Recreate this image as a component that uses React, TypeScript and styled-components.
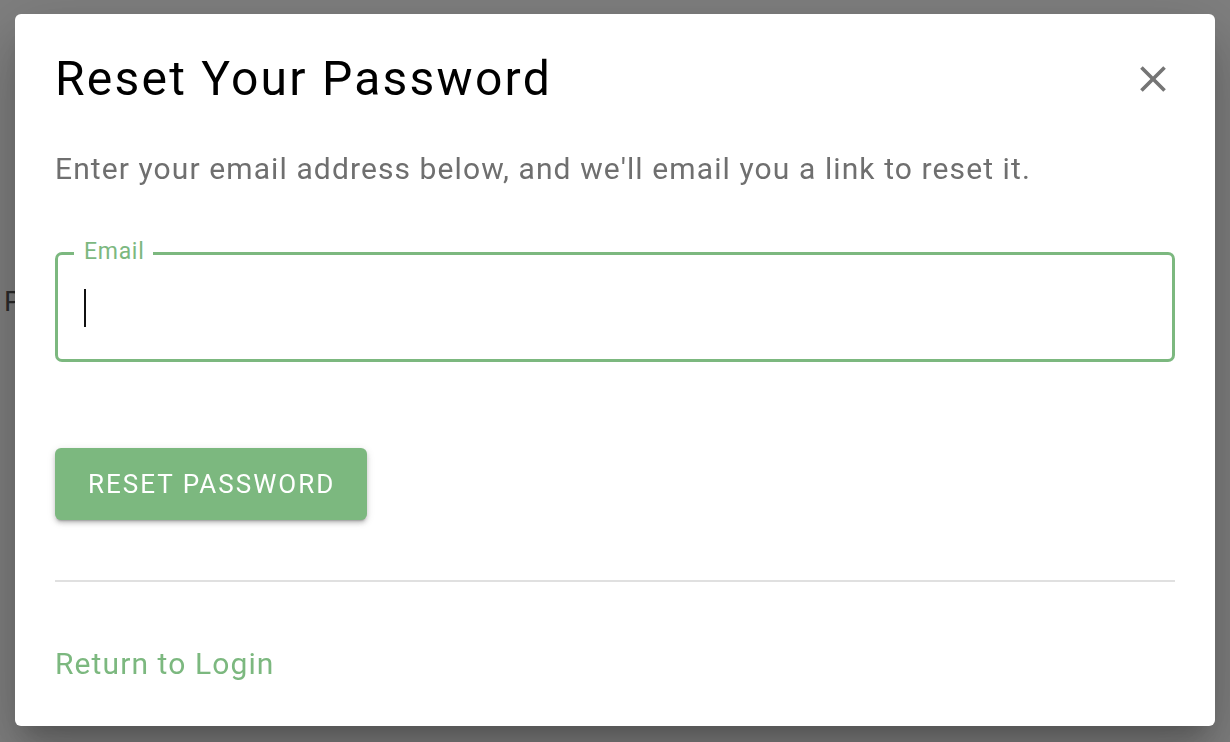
import React from "react";
import styled, { createGlobalStyle } from "styled-components";

const GREEN = "#7cb87f";

const Global = createGlobalStyle`
  html, body { margin: 0; padding: 0; background: #fff; }
  body { font-family: Roboto, "Noto Sans", Arial, sans-serif; }
  * { box-sizing: border-box; }
`;

const Page = styled.main`
  height: 742px;
  padding: 284px 0 0 4px;
`;

const PageText = styled.p`
  margin: 0;
  font-size: 28px;
  line-height: 36px;
  color: #555;
`;

const Backdrop = styled.div`
  position: fixed;
  inset: 0;
  background: rgba(0, 0, 0, 0.5);
  display: flex;
  justify-content: center;
  align-items: flex-start;
  padding-top: 14px;
`;

const Dialog = styled.section`
  width: 1200px;
  height: 712px;
  background: #fff;
  border-radius: 6px;
  padding: 37px 40px 0 40px;
  display: flex;
  flex-direction: column;
  box-shadow: 0px 16px 22px -10px rgba(0, 0, 0, 0.2),
    0px 36px 56px 4px rgba(0, 0, 0, 0.14),
    0px 14px 68px 12px rgba(0, 0, 0, 0.12);
`;

const Header = styled.header`
  display: flex;
  align-items: center;
  justify-content: space-between;
`;

const Title = styled.h2`
  margin: 0;
  font-size: 48px;
  line-height: 56px;
  font-weight: 400;
  letter-spacing: 2.25px;
  color: #000;
`;

const CloseButton = styled.button`
  width: 44px;
  height: 44px;
  padding: 0;
  border: none;
  background: none;
  color: #757575;
  display: flex;
  align-items: center;
  justify-content: center;
  cursor: pointer;
`;

const Lead = styled.p`
  margin: 42px 0 0 0;
  font-size: 30px;
  line-height: 40px;
  letter-spacing: 1.1px;
  color: #6f6f6f;
`;

const Field = styled.div`
  position: relative;
  margin-top: 63px;
  height: 110px;
  border: 3px solid ${GREEN};
  border-radius: 7px;
  display: flex;
  align-items: center;
  padding: 0 26px;
`;

const FieldLabel = styled.label`
  position: absolute;
  top: -19px;
  left: 16px;
  padding: 0 9px 0 10px;
  background: #fff;
  color: ${GREEN};
  font-size: 23px;
  line-height: 32px;
  letter-spacing: 0.7px;
`;

const Input = styled.input`
  flex: 1;
  border: none;
  outline: none;
  font-family: inherit;
  font-size: 30px;
  line-height: 40px;
  padding: 0;
  background: transparent;
  caret-color: transparent;
`;

const Caret = styled.span`
  position: absolute;
  left: 26px;
  top: 34px;
  width: 2px;
  height: 38px;
  background: #111;
`;

const PrimaryButton = styled.button`
  align-self: flex-start;
  margin-top: 86px;
  height: 72px;
  padding: 0 32px 0 33px;
  border: none;
  border-radius: 6px;
  background: ${GREEN};
  color: #fff;
  font-family: inherit;
  font-size: 26px;
  font-weight: 400;
  letter-spacing: 2px;
  text-transform: uppercase;
  box-shadow: 0px 3px 2px -2px rgba(0, 0, 0, 0.22),
    0px 3px 4px 0px rgba(0, 0, 0, 0.16), 0px 2px 8px 0px rgba(0, 0, 0, 0.12);
  cursor: pointer;
`;

const Divider = styled.hr`
  margin: 60px 0 0 0;
  border: none;
  height: 2px;
  background: #e0e0e0;
`;

const LinkText = styled.a`
  margin-top: 62px;
  align-self: flex-start;
  font-size: 30px;
  line-height: 40px;
  letter-spacing: 1.1px;
  color: ${GREEN};
  text-decoration: none;
  cursor: pointer;
`;

export default function App() {
  return (
    <>
      <Global />
      <Page>
        <PageText>Password</PageText>
      </Page>
      <Backdrop>
        <Dialog role="dialog" aria-labelledby="reset-title">
          <Header>
            <Title id="reset-title">Reset Your Password</Title>
            <CloseButton aria-label="close">
              <svg width="44" height="44" viewBox="0 0 24 24" fill="currentColor">
                <path d="M19 6.41 17.59 5 12 10.59 6.41 5 5 6.41 10.59 12 5 17.59 6.41 19 12 13.41 17.59 19 19 17.59 13.41 12z" />
              </svg>
            </CloseButton>
          </Header>
          <Lead>Enter your email address below, and we'll email you a link to reset it.</Lead>
          <Field>
            <FieldLabel htmlFor="email">Email</FieldLabel>
            <Input id="email" type="email" />
            <Caret />
          </Field>
          <PrimaryButton>Reset Password</PrimaryButton>
          <Divider />
          <LinkText>Return to Login</LinkText>
        </Dialog>
      </Backdrop>
    </>
  );
}
